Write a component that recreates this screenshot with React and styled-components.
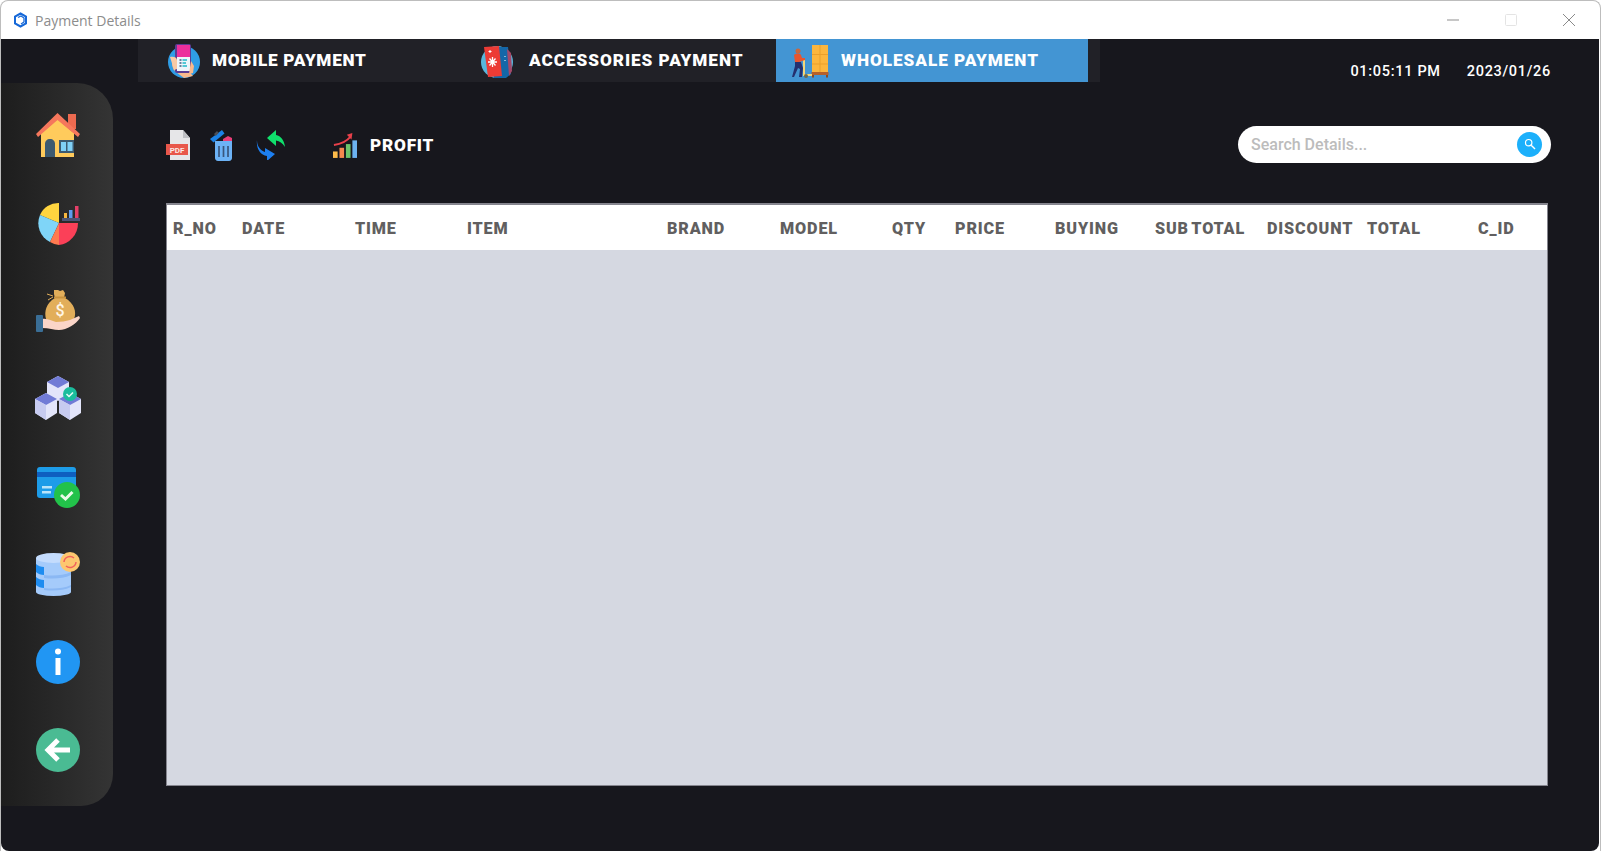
import React from "react"
import styled, { createGlobalStyle } from "styled-components"

const Global = createGlobalStyle`
  html, body { margin: 0; padding: 0; background: #ffffff; }
  * { box-sizing: border-box; }
`

const Frame = styled.div`
  width: 1601px;
  height: 851px;
  display: flex;
  flex-direction: column;
  overflow: hidden;
  background: #ffffff;
  border: 1px solid #bdbdbd;
  border-bottom: 0;
  border-radius: 8px 8px 0 0;
  font-family: Roboto, "Liberation Sans", sans-serif;
`

const TitleBar = styled.div`
  height: 38px;
  flex: none;
  display: flex;
  align-items: center;
  padding: 0 2px 0 12px;
`

const AppName = styled.span`
  margin-left: 7px;
  font-family: "Open Sans", "Liberation Sans", sans-serif;
  font-size: 14px;
  color: #8c8c8c;
`

const WindowButtons = styled.div`
  margin-left: auto;
  display: flex;
  align-items: center;
`

const WindowButton = styled.div`
  width: 58px;
  display: flex;
  justify-content: center;
`

const Body = styled.div`
  flex: 1;
  display: flex;
  flex-direction: column;
  background: #17171d;
  border-radius: 0 0 8px 8px;
  margin-right: 1px;
`

const TopRow = styled.div`
  height: 44px;
  flex: none;
  display: flex;
  padding-left: 137px;
`

const TabStrip = styled.div`
  width: 962px;
  height: 43px;
  display: flex;
  padding-left: 9px;
  background: #212127;
`

const Tab = styled.div`
  width: ${props => props.width}px;
  display: flex;
  align-items: center;
  padding-left: ${props => props.inset}px;
  background: ${props => (props.active ? "#4395d3" : "transparent")};
`

const TabLabel = styled.span`
  margin: 0 0 2px ${props => props.gap}px;
  font-size: 17.2px;
  font-weight: 900;
  letter-spacing: ${props => props.spacing || 0.95}px;
  color: #ffffff;
  white-space: nowrap;
`

const Clock = styled.div`
  margin-left: auto;
  padding: 24px 48px 0 0;
  display: flex;
  gap: 26px;
  font-size: 14.5px;
  font-weight: 500;
  letter-spacing: 0.7px;
  color: #ffffff;
`

const Content = styled.div`
  flex: 1;
  display: flex;
`

const SideBar = styled.nav`
  width: 112px;
  height: 723px;
  flex: none;
  display: flex;
  flex-direction: column;
  align-items: center;
  gap: 43.8px;
  padding: 30px 0 0 2px;
  background: linear-gradient(90deg, #1d1d1d, #343434);
  border-radius: 0 36px 32px 0;
`

const SideItem = styled.div`
  height: 44px;
  display: flex;
  align-items: center;
  justify-content: center;
`

const Main = styled.main`
  flex: 1;
  padding: 40px 48px 0 53px;
`

const ToolBar = styled.div`
  height: 44px;
  display: flex;
  align-items: center;
  margin-bottom: 36px;
`

const ToolIcon = styled.div`
  display: flex;
  margin-left: ${props => props.offset || 0}px;
`

const ProfitLabel = styled.span`
  margin-left: 13px;
  font-size: 17.2px;
  font-weight: 900;
  letter-spacing: 0.8px;
  color: #ffffff;
`

const SearchBox = styled.div`
  margin: 0 0 2px auto;
  width: 313px;
  height: 37px;
  display: flex;
  align-items: center;
  justify-content: space-between;
  padding: 0 9px 0 13px;
  background: #ffffff;
  border-radius: 19px;
`

const Placeholder = styled.span`
  font-size: 16px;
  font-weight: 500;
  color: #bcbcbc;
`

const SearchButton = styled.div`
  width: 25px;
  height: 25px;
  display: flex;
  align-items: center;
  justify-content: center;
  background: #1cb0fb;
  border-radius: 50%;
`

const Table = styled.div`
  height: 583px;
  margin-right: 3px;
  display: flex;
  flex-direction: column;
  background: #d5d8e1;
  border: 1px solid #85858e;
  border-top-width: 2px;
`

const HeaderRow = styled.div`
  height: 45px;
  flex: none;
  display: grid;
  grid-template-columns: 69px 113px 112px 200px 113px 112px 63px 100px 100px 112px 100px 111px 1fr;
  align-items: center;
  padding: 2px 0 0 6px;
  background: #ffffff;
`

const HeaderCell = styled.span`
  font-size: 16.2px;
  font-weight: 900;
  letter-spacing: 0.85px;
  word-spacing: -2px;
  color: #615f60;
  white-space: nowrap;
`

const columns = ["R_NO", "DATE", "TIME", "ITEM", "BRAND", "MODEL", "QTY", "PRICE", "BUYING", "SUB TOTAL", "DISCOUNT", "TOTAL", "C_ID"]

const AppLogo = () => (
  <svg width="15" height="16" viewBox="0 0 15 16" fill="none">
    <path d="M7.500 1.500 13 4.500v7l-5.500 3-5.500-3v-7z" stroke="#1668d8" strokeWidth="2" />
    <path d="M5 5.500 8 4l3 2v4l-3 2" stroke="#1668d8" strokeWidth="1.300" />
  </svg>
)

const Minimize = () => (
  <svg width="14" height="14" viewBox="0 0 14 14"><path d="M1 7h12" stroke="#8f8f8f" strokeWidth="1" /></svg>
)

const Maximize = () => (
  <svg width="14" height="14" viewBox="0 0 14 14"><rect x="1.500" y="1.500" width="11" height="11" rx="1" fill="none" stroke="#e4e4e4" /></svg>
)

const Close = () => (
  <svg width="14" height="14" viewBox="0 0 14 14"><path d="M1 1l12 12M13 1 1 13" stroke="#8a8a8a" strokeWidth="1" /></svg>
)

const MobileIcon = () => (
  <svg width="34" height="36" viewBox="0 0 34 36">
    <circle cx="17" cy="19" r="16" fill="#2f9de6" />
    <path d="M6 15c-2 5-1 11 3 14l8 6 9-2-7-8z" fill="#f9b98c" />
    <rect x="8" y="1" width="16" height="29" rx="2" fill="#5b3c93" />
    <rect x="10" y="2" width="13" height="12" fill="#ec2f9c" />
    <rect x="10" y="14" width="13" height="14" fill="#eef5fa" />
    <path d="M12.500 17h2M12.500 20h2M12.500 23h2" stroke="#3d5a80" strokeWidth="1.300" />
    <path d="M15.500 17H20M15.500 20H19M15.500 23H20" stroke="#22b8c9" strokeWidth="1.300" />
    <path d="M3 14c3-1 7 0 7 3v9l-3 1z" fill="#f9c9a4" />
    <path d="M24 18l3 5-1 7-4 1z" fill="#f9b98c" />
  </svg>
)

const AccessoryIcon = () => (
  <svg width="34" height="36" viewBox="0 0 34 36">
    <circle cx="17" cy="19" r="16" fill="#57b7dc" />
    <path d="M13 4h15l3 27-5 4H14z" fill="#1467a8" />
    <path d="M27 6l4 4 1 18-3 5z" fill="#a4496a" />
    <path d="M4 4l15-1 3 30-14 1z" fill="#ec3b35" />
    <path d="M8 19h9M12.500 14v10M9.500 15.500l6 7M15.500 15.500l-6 7" stroke="#ffffff" strokeWidth="1.300" />
    <path d="M10 7v3M8.500 8.500h3" stroke="#ffffff" strokeWidth="1" />
    <path d="M25 13v1M25 17v1" stroke="#d7eef7" strokeWidth="1.200" />
  </svg>
)

const WholesaleIcon = () => (
  <svg width="38" height="36" viewBox="0 0 38 36">
    <rect x="21" y="2" width="16" height="28" fill="#fbb63e" />
    <path d="M21 11.500h16M21 21h16M29 2v28" stroke="#e99f2c" strokeWidth="1" />
    <rect x="20.500" y="29" width="17" height="3" fill="#b5602a" />
    <path d="M22 32v2.500M36 32v2.500" stroke="#8a4a20" strokeWidth="2" />
    <path d="M13 15v17h8" stroke="#f4d77c" strokeWidth="2" fill="none" />
    <circle cx="15" cy="33" r="2" fill="#6d6a4c" />
    <circle cx="7" cy="8" r="2.500" fill="#c9683e" />
    <path d="M3 12c2-2 6-2 7 0l1 3h3v2l-6 2H4z" fill="#e8552e" />
    <path d="M4 19h6l2 6-1 9H8l1-8-2-1-4 9H1l3-11z" fill="#24306f" />
  </svg>
)

const PdfIcon = () => (
  <svg width="25" height="32" viewBox="0 0 25 32">
    <path d="M4 1h13l7 8v22H4z" fill="#e6e6e8" />
    <path d="M17 1l7 8h-7z" fill="#bfc0c4" />
    <rect x="0" y="15" width="22" height="11" fill="#e8574a" />
    <text x="11" y="23.500" textAnchor="middle" fontFamily="Roboto, sans-serif" fontWeight="700" fontSize="8" fill="#fbe9e6">PDF</text>
  </svg>
)

const TrashIcon = () => (
  <svg width="24" height="32" viewBox="0 0 24 32">
    <path d="M6 12h17v17c0 1.500-1 3-3 3H9c-2 0-3-1.500-3-3z" fill="#6cb2f5" />
    <path d="M10 17v11M14.500 17v11M19 17v11" stroke="#39567c" strokeWidth="1.700" />
    <path d="M14 10l5-3 4 2v3h-9z" fill="#ea3d78" />
    <path d="M1 10 13 1l2.500 3.500-11 9z" fill="#1c82e6" />
    <path d="M5 5l3-3 1.700 2-3 3z" fill="#4d4f57" />
  </svg>
)

const RefreshIcon = () => (
  <svg width="30" height="30" viewBox="0 0 30 30">
    <path d="M11 8 20 0v5c5 1 8 5 9 12-3-4-5-6-9-6.500V16z" fill="#10e06c" />
    <path d="M1 10c0 6 3 10 8 12v-4l10 6-8 7v-5C4 25 0 18 1 10z" fill="#1d7ff0" />
  </svg>
)

const ProfitIcon = () => (
  <svg width="24" height="28" viewBox="0 0 26 28">
    <rect x="0" y="21" width="5" height="7" fill="#fdbb4a" />
    <rect x="7" y="17" width="5" height="11" fill="#f58a4e" />
    <rect x="14" y="13" width="5" height="15" fill="#6cc56a" />
    <rect x="21" y="9" width="5" height="19" fill="#6cb2f0" />
    <path d="M1 14c8-1 14-4 18-9" stroke="#e8404a" strokeWidth="2" fill="none" />
    <path d="M15 3l6-2-1 7z" fill="#e8404a" />
  </svg>
)

const HomeIcon = () => (
  <svg width="44" height="44" viewBox="0 0 44 44">
    <rect x="32" y="1" width="8" height="15" fill="#ec6a50" />
    <path d="M5 20 21.500 6 38 20v24H5z" fill="#ffcb5c" />
    <path d="M0 21 21.500 0 44 21l-2 3L21.500 7 2 24z" fill="#f5775c" />
    <path d="M9 44V31c0-3 2-5 5-5s5 2 5 5v13z" fill="#3d5a70" />
    <rect x="23" y="27" width="15" height="13" fill="#3d5a70" />
    <rect x="25" y="29" width="5" height="9" fill="#80d0f5" />
    <rect x="31.500" y="29" width="5" height="9" fill="#80d0f5" />
  </svg>
)

const PieIcon = () => (
  <svg width="44" height="44" viewBox="0 0 44 44">
    <path d="M23 22V2A20 20 0 0 0 4 14z" fill="#ffd53f" />
    <path d="M23 22 4 14a21 21 0 0 0 10 27z" fill="#7fd5f8" />
    <path d="M23 22 14 41a21 21 0 0 0 9 3z" fill="#ff7a50" />
    <path d="M23 22h19a21 22 0 0 1-19 22z" fill="#fb4058" />
    <rect x="26" y="17" width="18" height="3" fill="#4b5475" />
    <rect x="28" y="12" width="3" height="5" fill="#f5b63e" />
    <rect x="33" y="9" width="3.500" height="8" fill="#5d9cf0" />
    <rect x="39" y="5" width="3.500" height="12" fill="#e43f68" />
  </svg>
)

const MoneyIcon = () => (
  <svg width="44" height="44" viewBox="0 0 44 44">
    <path d="M19 9c-9 5-11 14-9 21 2 5 23 5 28 0 3-7 0-16-9-21z" fill="#e2ae5a" />
    <path d="M18 1h4l2 1 3-1 2 3-1 5H19l-1-4z" fill="#e2ae5a" />
    <rect x="18" y="7.500" width="12" height="2" fill="#c99440" />
    <path d="M11 5l6 2M12 11l5-3" stroke="#e2ae5a" strokeWidth="1" />
    <text x="24" y="27" textAnchor="middle" fontFamily="Roboto, sans-serif" fontWeight="500" fontSize="16" fill="#fff6e6">$</text>
    <path d="M6 30c6-1 9 2 14 3 5 0 10-1 14-2l9-4 1 2c-4 6-13 12-21 12-5 0-10-2-17-2z" fill="#fbd5c8" />
    <rect x="0" y="26" width="7" height="17" rx="1" fill="#3a6e96" />
  </svg>
)

const BoxesIcon = () => (
  <svg width="46" height="46" viewBox="0 0 46 46">
    <path d="M12 7 23 1l11 6v13l-11 6-11-6z" fill="#e3e5fa" />
    <path d="M12 7 23 1l11 6-11 6z" fill="#717bd6" />
    <path d="M0 24l11-6 11 6v14l-11 7-11-7z" fill="#e3e5fa" />
    <path d="M0 24l11-6 11 6-11 6z" fill="#717bd6" />
    <path d="M24 24l11-6 11 6v14l-11 7-11-7z" fill="#e3e5fa" />
    <path d="M24 24l11-6 11 6-11 6z" fill="#717bd6" />
    <path d="M11 30v15L0 38V24zM35 30v15l-11-7V24z" fill="#c7cbf0" />
    <circle cx="35" cy="19" r="7" fill="#1bbd9d" />
    <path d="M31.500 19l2.500 2.500 4-4" stroke="#e6fbf5" strokeWidth="1.500" fill="none" />
  </svg>
)

const CardIcon = () => (
  <svg width="46" height="44" viewBox="0 0 46 44">
    <rect x="2" y="3" width="39" height="31" rx="3" fill="#1d9ce8" />
    <rect x="2" y="8" width="39" height="5" fill="#0e5fc0" />
    <path d="M7 22h10v2.500H7zM7 27h9v2.500H7z" fill="#b9e4f9" />
    <circle cx="32" cy="31" r="13" fill="#22c24a" />
    <path d="M26 31l4.500 4 7-7" stroke="#e9fbe9" strokeWidth="3" fill="none" />
  </svg>
)

const DataIcon = () => (
  <svg width="44" height="44" viewBox="0 0 44 44">
    <rect x="0" y="6" width="35" height="34" fill="#a5cbfb" />
    <ellipse cx="17.500" cy="40" rx="17.500" ry="4" fill="#a5cbfb" />
    <ellipse cx="17.500" cy="6" rx="17.500" ry="5" fill="#c4dcfd" />
    <path d="M0 12c2 2 5 3 8 3v8c-3 0-6-1-8-3zM0 25c2 2 5 3 8 3v8c-3 0-6-1-8-3z" fill="#1e8cf0" />
    <path d="M8 23c8 1 19 1 27-3v3c-8 4-19 4-27 3zM8 36c8 1 19 1 27-3v2c-8 4-19 4-27 3z" fill="#8bb8f4" />
    <circle cx="34" cy="10" r="10" fill="#fdc76f" />
    <path d="M28 10a6 6 0 0 1 10-4M40 10a6 6 0 0 1-10 4" stroke="#f2615c" strokeWidth="1.500" fill="none" />
  </svg>
)

const InfoIcon = () => (
  <svg width="44" height="44" viewBox="0 0 44 44">
    <circle cx="22" cy="22" r="22" fill="#2196f3" />
    <circle cx="22" cy="11.500" r="3" fill="#ffffff" />
    <rect x="19.500" y="18" width="5" height="17" fill="#ffffff" />
  </svg>
)

const BackIcon = () => (
  <svg width="44" height="44" viewBox="0 0 44 44">
    <circle cx="22" cy="22" r="22" fill="#4abb93" />
    <path d="M22 12 12 22l10 10M12 22h22" stroke="#ffffff" strokeWidth="5" fill="none" />
  </svg>
)

const SearchGlyph = () => (
  <svg width="12" height="12" viewBox="0 0 12 12" fill="none">
    <circle cx="4.700" cy="4.700" r="3.200" stroke="#ffffff" strokeWidth="1.200" />
    <path d="M7.200 7.200 11 11" stroke="#ffffff" strokeWidth="1.400" />
  </svg>
)

const App = () => (
  <Frame>
    <Global />
    <TitleBar>
      <AppLogo />
      <AppName>Payment Details</AppName>
      <WindowButtons>
        <WindowButton><Minimize /></WindowButton>
        <WindowButton><Maximize /></WindowButton>
        <WindowButton><Close /></WindowButton>
      </WindowButtons>
    </TitleBar>
    <Body>
      <TopRow>
        <TabStrip>
          <Tab width={317} inset={20}>
            <MobileIcon />
            <TabLabel gap={11} spacing={0.7}>MOBILE PAYMENT</TabLabel>
          </Tab>
          <Tab width={312} inset={16}>
            <AccessoryIcon />
            <TabLabel gap={15}>ACCESSORIES PAYMENT</TabLabel>
          </Tab>
          <Tab width={312} inset={15} active>
            <WholesaleIcon />
            <TabLabel gap={12}>WHOLESALE PAYMENT</TabLabel>
          </Tab>
        </TabStrip>
        <Clock>
          <span>01:05:11 PM</span>
          <span>2023/01/26</span>
        </Clock>
      </TopRow>
      <Content>
        <SideBar>
          <SideItem><HomeIcon /></SideItem>
          <SideItem><PieIcon /></SideItem>
          <SideItem><MoneyIcon /></SideItem>
          <SideItem><BoxesIcon /></SideItem>
          <SideItem><CardIcon /></SideItem>
          <SideItem><DataIcon /></SideItem>
          <SideItem><InfoIcon /></SideItem>
          <SideItem><BackIcon /></SideItem>
        </SideBar>
        <Main>
          <ToolBar>
            <ToolIcon><PdfIcon /></ToolIcon>
            <ToolIcon offset={18}><TrashIcon /></ToolIcon>
            <ToolIcon offset={23}><RefreshIcon /></ToolIcon>
            <ToolIcon offset={47}><ProfitIcon /></ToolIcon>
            <ProfitLabel>PROFIT</ProfitLabel>
            <SearchBox>
              <Placeholder>Search Details...</Placeholder>
              <SearchButton><SearchGlyph /></SearchButton>
            </SearchBox>
          </ToolBar>
          <Table>
            <HeaderRow>
              {columns.map(name => <HeaderCell key={name}>{name}</HeaderCell>)}
            </HeaderRow>
          </Table>
        </Main>
      </Content>
    </Body>
  </Frame>
)

export default App
